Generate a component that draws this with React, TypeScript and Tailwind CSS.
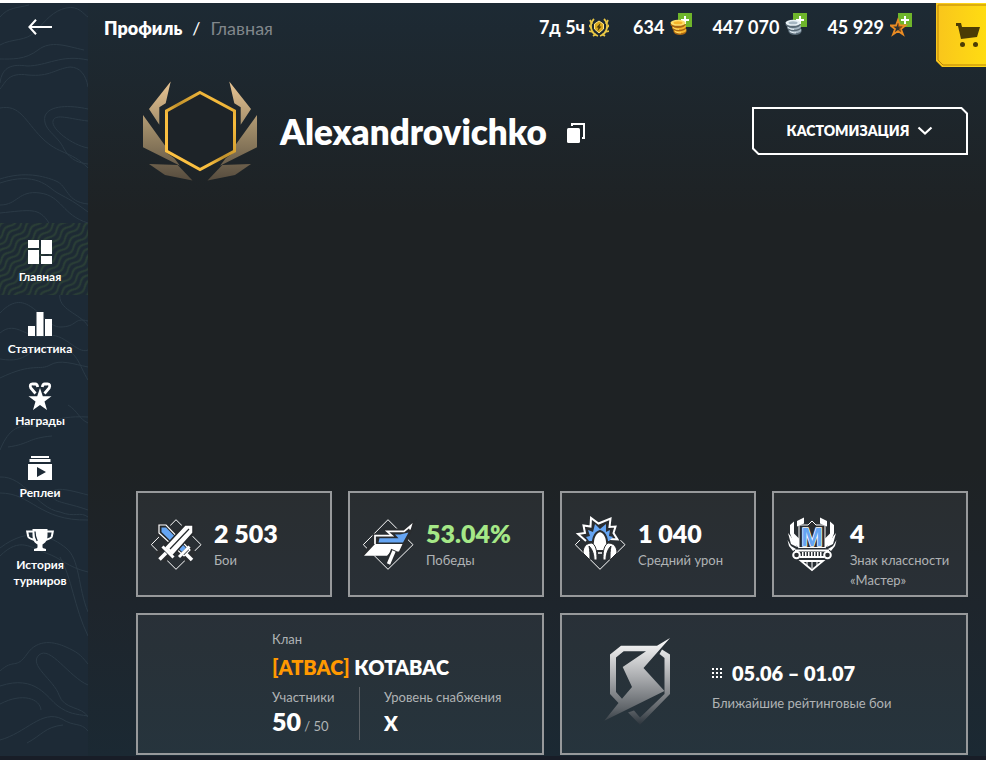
import type { ReactNode } from "react";

const FONT = "font-['Lato','Open_Sans',sans-serif]";

interface NavItem {
  label: string;
  icon: ReactNode;
  active?: boolean;
}

function BackArrow() {
  return (
    <svg width="24" height="16" viewBox="0 0 24 16" fill="none" stroke="#fff" strokeWidth="2" aria-hidden="true">
      <path d="M8 .8 1.4 8 8 15.2M1.4 8H24" />
    </svg>
  );
}

const NAV_ITEMS: NavItem[] = [
  {
    label: "Главная",
    active: true,
    icon: <path d="M0 0h11v8H0zM13 0h11v14H13zM0 10h11v14H0zM13 16h11v8H13z" />,
  },
  {
    label: "Статистика",
    icon: <path d="M0 14h7v10H0zM8.500 0h7v24h-7zM17 7h7v17h-7z" />,
  },
  {
    label: "Награды",
    icon: (
      <>
        <path d="M12 4 14.800 12.300H23.500L16.500 17.500 19 26 12 21 5 26 7.500 17.500.5 12.300H9.200Z" />
        <path d="M7.500 9.500 2.800 4Q1-.3 5 0H7.500Q9 0 9.800 3M16.500 9.500 21.200 4Q23-.3 19 0H16.500Q15 0 14.200 3" fill="none" stroke="#fff" strokeWidth="2.800" />
      </>
    ),
  },
  {
    label: "Реплеи",
    icon: <path d="M3 0h18v2H3zM1.500 3h21v3h-21zM0 8h24v16H0zM9 11v10l9-5Z" fillRule="evenodd" />,
  },
  {
    label: "История турниров",
    icon: (
      <>
        <path d="M4.500 1h15v6c0 5-2 8-5 9.500V19c0 1 1 1.500 3.500 2v2H6v-2c2.500-.5 3.500-1 3.500-2v-2.500c-3-1.500-5-4.500-5-9.500Z" />
        <path d="M5 3.500H-.8l1 5C.8 10.500 3 11 7 12M19 3.500h5.800l-1 5c-.6 2-2.800 2.500-6.800 3.500" fill="none" stroke="#fff" strokeWidth="2" />
        <path d="M7 3.500c0 5 .8 7 2.200 9.500" fill="none" stroke="#1d2a36" strokeWidth="1.300" />
      </>
    ),
  },
];

// Topographic contour lines behind the navigation.
function Contours() {
  return (
    <svg
      className="pointer-events-none absolute inset-0 h-full w-full"
      viewBox="0 0 88 757"
      preserveAspectRatio="xMidYMin slice"
      fill="none"
      stroke="#2b3a46"
      strokeWidth="1"
      aria-hidden="true"
    >
      <path d="M0 42c12-7 26-3 36-14S53 8 66 5s18 7 22 9M0 14C8 4 18 5 29 2" />
      <path d="M0 56c12 0 25 1 38-9s28-4 46 0M0 80c2-17 13-19 27-17 20 0 34-12 61-6M0 86c6-7 8-17 28-14 22 2 27-6 42-8 10 0 16 8 18 20" />
      <path d="M0 105c20-4 25 13 42 30s28 12 46 30M88 106c-18-4-39-4-43 7-3 14 13 19 19 33 7 12 16 14 24 15" />
      <path d="M88 118c-18-2-33-8-35 0s19 24 35 27M0 176c24-8 44-3 56 2s10 21 32 23M0 180c36-12 48 4 56 9s15 7 32 20" />
      <path d="M0 202c18 0 18-15 40-12s22 22 48 30M0 210c30-3 39-6 49 10M0 310c28-30 42 14 60 14s13-10 28-6M0 330c16-14 28 8 46 3s31 19 42 14" />
      <path d="M60 290c-3 17 20 20 28 33M0 356c30 5 24-11 54-13 24 2 25 20 34 34M0 375c33-16 40-7 50-13s23-1 38 2" />
      <path d="M0 447c7-17 15-25 30-24s22-11 58-9M8 444c22-3 20-9 44-11M88 420c-9-4-10-12-20-18" />
      <path d="M88 492c-15-4-36-10-36-1s14 8 36 16M0 474c25-1 36 31 60 35 15 6 20-1 28 5M0 490c32 0 39 28 88 27" />
      <path d="M0 553c20-20 31-8 46-3s21 14 42 19M0 545c30-23 52-11 66 0s12 40 22 64M60 554c12 21 14 50 28 79" />
      <path d="M0 668c14-13 16-1 27-17s28-12 39-7 14 7 22 17M88 682c-19-8-38-40-49-30s15 25 20 40 23 11 29 22" />
      <path d="M0 683c36-12 47 12 58 20s17 8 30 10M0 701c23-12 40-5 41 6M0 737c26-7 42-31 62-21 12 8 19 3 26 12M27 740c15-8 18-16 36-18" />
    </svg>
  );
}

function ActivePattern() {
  return (
    <svg className="absolute inset-0 h-full w-full" aria-hidden="true">
      <defs>
        <pattern id="nav-waves" width="20" height="6" patternUnits="userSpaceOnUse" patternTransform="rotate(-45)">
          <path d="M-5 3Q0-.5 5 3t10 0 10 0" fill="none" stroke="#2b4036" strokeWidth="2" />
        </pattern>
      </defs>
      <rect width="100%" height="100%" fill="url(#nav-waves)" />
    </svg>
  );
}

function Sidebar() {
  return (
    <aside className="relative w-[88px] shrink-0 bg-[#1d2a36]">
      <Contours />
      <button type="button" aria-label="Назад" className="relative flex h-12 w-20 items-center justify-center">
        <BackArrow />
      </button>
      <nav className="relative mt-[172px]">
        {NAV_ITEMS.map((item) => (
          <a
            key={item.label}
            href="#"
            aria-current={item.active ? "page" : undefined}
            className={`relative block h-[72px] pt-[17px] text-white ${item.active ? "bg-[#1d2a34]" : ""}`}
          >
            {item.active && <ActivePattern />}
            <span className="relative flex w-20 flex-col items-center gap-[5px] text-center text-xs leading-4 font-bold">
              <svg width="24" height="24" viewBox="0 0 24 24" fill="#fff" className="overflow-visible" aria-hidden="true">
                {item.icon}
              </svg>
              {item.label}
            </span>
          </a>
        ))}
      </nav>
    </aside>
  );
}

function PlusBadge() {
  return (
    <>
      <path d="M8 0h14v14H8z" fill="#6fb52b" />
      <path d="M15 3v8M11 7h8" stroke="#fff" strokeWidth="2" />
    </>
  );
}

function CoinStack({ light, mid, dark }: { light: string; mid: string; dark: string }) {
  return (
    <svg width="22" height="28" viewBox="0 0 22 28" aria-hidden="true">
      <PlusBadge />
      <ellipse cx="10" cy="18.500" rx="6.500" ry="3.500" fill={dark} />
      <ellipse cx="10" cy="17" rx="6.500" ry="3.200" fill={mid} />
      <ellipse cx="9" cy="15" rx="7" ry="3.200" fill={dark} />
      <ellipse cx="9" cy="13.500" rx="7" ry="3.200" fill={mid} />
      <ellipse cx="8" cy="11.500" rx="7.500" ry="3.500" fill={dark} />
      <ellipse cx="8" cy="9.800" rx="7.500" ry="3" fill={light} />
      <ellipse cx="8" cy="9.800" rx="4.500" ry="1.500" fill={mid} />
      <path d="M3 14.500c2 1.500 4 2 6 1.800M5 18.500c2 1.200 4 1.600 6 1.300" fill="none" stroke={light} />
    </svg>
  );
}

function PremiumIcon() {
  return (
    <svg width="20" height="24" viewBox="0 0 20 24" aria-hidden="true">
      <g fill="none" stroke="#e9c744" strokeWidth="1.800">
        <path d="M5 4C0 9 1 18 9 21M15 4c5 5 4 14-4 17" />
        <path d="m3 9-2-4M2.500 13-.5 10M4 17l-4-1M17 9l2-4M17.500 13l3-3M16 17l4-1M7 19l-3 2M13 19l3 2" />
      </g>
      <path d="m10 6 4.500 3v5L10 18l-4.500-4V9Z" fill="#d8a71d" stroke="#ffe787" />
      <path d="m11.500 8-4 4.500h2L8.500 16l4-4.500h-2Z" fill="#44350b" />
    </svg>
  );
}

function StarIcon() {
  return (
    <svg width="22" height="28" viewBox="0 0 22 28" aria-hidden="true">
      <PlusBadge />
      <path d="m8 7 2 5.500h5.500L11 16l2 5.500L8 18l-5 3.500L5 16 .5 12.500H6Z" fill="#313431" stroke="#e98b23" strokeWidth="1.800" />
      <path d="m8 10.500 1 3.500h3l-2.500 1.800 1 3.200" fill="none" stroke="#a45712" />
    </svg>
  );
}

function Header() {
  return (
    <header className="flex items-start pl-4">
      <nav aria-label="Путь" className="flex h-[50px] items-center gap-2.5 text-lg">
        <a href="#" className="font-extrabold text-white">Профиль</a>
        <span className="text-white">/</span>
        <span className="font-normal text-[#81878b]">Главная</span>
      </nav>
      <ul className="mr-6 ml-auto flex h-12 items-center gap-5 text-lg font-bold text-white">
        <li className="mr-1 flex items-center gap-1">7д 5ч <PremiumIcon /></li>
        <li className="flex items-center gap-1.5">634 <CoinStack light="#ffe06c" mid="#f6b52c" dark="#a96513" /></li>
        <li className="flex items-center gap-1.5">447 070 <CoinStack light="#e8f1f6" mid="#a6b7c3" dark="#596a76" /></li>
        <li className="flex items-center gap-1.5">45 929 <StarIcon /></li>
      </ul>
      <button type="button" aria-label="Магазин" className="w-[50px] shrink-0">
        <svg width="50" height="64" viewBox="0 0 50 64" aria-hidden="true">
          <defs>
            <linearGradient id="shop" x1="0" x2="1">
              <stop stopColor="#f9c51c" />
              <stop offset="1" stopColor="#ffdc12" />
            </linearGradient>
          </defs>
          <path d="M0 0h50v64H6l-6-6Z" fill="url(#shop)" />
          <path d="M50 2H2v55l5 5h43" fill="none" stroke="#b98408" />
          <path d="M20 20h5l1 4h18l-3 10-16 2-3-13h-2Z" fill="#4b3c05" />
          <circle cx="26.500" cy="41.500" r="2.500" fill="#4b3c05" />
          <circle cx="39.500" cy="41.500" r="2.500" fill="#4b3c05" />
        </svg>
      </button>
    </header>
  );
}

function Avatar() {
  const feathers = (
    <>
      <path d="m28.700 1.500-5 21.800-6.400 4v17.400L7 29Z" />
      <path d="M1 35v32.300l37 18.400-5.700-7.400-9-6.300V66Z" />
      <path d="m7 84 28.700 1L50.500 100.500 23 95Z" />
    </>
  );
  return (
    <svg width="116" height="102" viewBox="0 0 116 102" aria-hidden="true">
      <defs>
        <linearGradient id="feather" gradientUnits="userSpaceOnUse" x1="0" y1="0" x2="0" y2="102">
          <stop stopColor="#ecc795" />
          <stop offset=".5" stopColor="#9b8866" />
          <stop offset="1" stopColor="#544a3d" />
        </linearGradient>
        <linearGradient id="hex" x1="0" y1="1" x2="1" y2="0">
          <stop stopColor="#ffc445" />
          <stop offset=".35" stopColor="#f8bd3e" />
          <stop offset=".5" stopColor="#c1912b" />
          <stop offset=".8" stopColor="#f6bb3c" />
          <stop offset="1" stopColor="#d39f30" />
        </linearGradient>
      </defs>
      <g fill="url(#feather)">
        {feathers}
        <g transform="translate(116) scale(-1 1)">{feathers}</g>
      </g>
      <path d="M58 12.500 92.500 31v40L58 89.500 24.500 71V31Z" fill="#1d2328" stroke="url(#hex)" strokeWidth="3" />
    </svg>
  );
}

function ProfileHead() {
  return (
    <div className="mt-[13px] flex items-center pl-1.5">
      <Avatar />
      <h1 className="ml-[22px] text-[35px] leading-10 font-extrabold text-white">Alexandrovichko</h1>
      <button type="button" aria-label="Скопировать" className="mt-1 ml-5">
        <svg width="18" height="20" viewBox="0 0 18 20" aria-hidden="true">
          <rect y="5" width="13" height="15" rx="1.500" fill="#fff" />
          <path d="M5 3V1h12v14h-2" fill="none" stroke="#fff" strokeWidth="2" />
        </svg>
      </button>
      <button
        type="button"
        className="relative ml-auto flex h-12 w-[216px] items-center justify-center gap-2 text-sm font-extrabold text-white"
      >
        <svg className="absolute inset-0" width="216" height="48" viewBox="0 0 216 48" fill="none" stroke="#fff" strokeWidth="2" aria-hidden="true">
          <path d="M1 1h208.500L215 6.500V47H6.500L1 41.500Z" />
        </svg>
        КАСТОМИЗАЦИЯ
        <svg width="16" height="16" viewBox="0 0 16 16" fill="none" stroke="#fff" strokeWidth="2.200" aria-hidden="true">
          <path d="m1.500 4.500 6.500 6 6.500-6" />
        </svg>
      </button>
    </div>
  );
}

const DIAMOND = "M26 1.700 51 26.700 26 51.300 1.300 26.700Z";

function BattlesIcon() {
  return (
    <>
      <path d={DIAMOND} fill="none" stroke="#fff" />
      <g stroke="#2a2d30" strokeWidth="4" strokeLinejoin="round">
        <path d="M9 7h8l27 28-7 7L9 16Z" />
        <path d="M43 7h-8L8 35l7 7 28-27Z" />
      </g>
      <path d="M9 7h7l24 25-6 6L9 15Z" fill="#25292c" stroke="#fff" strokeWidth="1.200" />
      <path d="M11.500 9.500H16L36 30l-4 4-20.500-20Z" fill="#65a5f3" />
      <path d="m29 39 10.500-10.500" stroke="#fff" strokeWidth="3" />
      <path d="m36 36 6 6" stroke="#fff" strokeWidth="3.500" />
      <path d="M43 7h-8L14 29.500l8.500 8.500L43 15Z" fill="#fff" stroke="#25292c" strokeWidth="1.500" />
      <path d="M39 11 20 31" stroke="#25292c" strokeWidth="1.200" />
      <path d="M12.500 28.500 23.500 39.500" stroke="#fff" strokeWidth="3" />
      <path d="m16 35-6.500 6.500" stroke="#fff" strokeWidth="3.500" />
    </>
  );
}

function WinsIcon() {
  return (
    <>
      <path d={DIAMOND} fill="none" stroke="#fff" />
      <path d="M12 17h15l-3-5h19l8-6-9 21-6 9H2l10-12Z" fill="#292c2f" stroke="#292c2f" strokeWidth="3" />
      <path d="M13 26V17.700h17l-5-4.400h17L49 7.500l-1.200 4" fill="none" stroke="#fff" strokeWidth="1.700" />
      <path d="M17.500 20.300h19L33 16.500h5l8.500-2L41 24.500H16.500Z" fill="#65a5f3" />
      <path d="M13 26h27.500L37 33.500h-8l-4 4.300H2Z" fill="#fff" />
      <path d="m32 32-5.500 13.500" stroke="#292c2f" strokeWidth="6" />
      <path d="m32 33-5.500 13" stroke="#fff" strokeWidth="3.500" />
    </>
  );
}

function DamageIcon() {
  return (
    <>
      <path d="m6 22-4.700 4.700L26 51.300l25-24.600-4.500-4.500" fill="none" stroke="#fff" />
      <path
        d="M12 23 4 16l7-1L9.500 7.500l7 1L17 0l7.500 5.500L36.500.5 35.500 9l6-.5-2 6.500 4 6.500-8-.5"
        fill="#2a2d30"
        stroke="#fff"
        strokeWidth="2"
      />
      <path d="m15 23-3-4 4-1-2-6 5 2 2-8 5 5 6-5v8l4-2-1 6 4 1-4 4Z" fill="#65a5f3" />
      <path d="M19 33c-1-10 0-18 7-20 7 2 8 10 7 20Z" fill="#fff" stroke="#2a2d30" strokeWidth="2" />
      <path d="M9 35c0-6 3-10 9-10 5 3 5 11 5 17h-3c0-8-3-12-5-14 1 5 1 8 1 14ZM43 35c0-6-3-10-9-10-5 3-5 11-5 17h3c0-8 3-12 5-14-1 5-1 8-1 14Z" fill="#fff" stroke="#2a2d30" strokeWidth="1" />
      <path d="M24 35h4" stroke="#fff" strokeWidth="1.500" />
    </>
  );
}

function MasterIcon() {
  const wing = (
    <>
      <path d="M18-.5v6l-7 3V3Z" />
      <path d="M8 3.500v12l5 5v10l-6-7-3-8V7Z" />
      <path d="M2 15c3 3 5 7 8 11l1 3-6-3Z" />
      <path d="M1.500 22 5 28l5 3-3 2-4-5Z" />
    </>
  );
  return (
    <>
      <g fill="#fff">
        {wing}
        <g transform="translate(52) scale(-1 1)">{wing}</g>
      </g>
      <path d="M13 29.500V7h9l4-4 4 4h9v22.500Z" fill="#292c2f" stroke="#fff" strokeWidth="1" />
      <text
        x="26"
        y="28"
        textAnchor="middle"
        fontFamily="Liberation Sans, sans-serif"
        fontWeight="700"
        fontSize="26"
        fill="#65a5f3"
        stroke="#fff"
        strokeWidth="1.500"
        paintOrder="stroke"
      >
        M
      </text>
      <path d="M9 32.500h34M14 39h24M15 43h22L26 52Z" fill="none" stroke="#fff" strokeWidth="1.800" />
      <path d="M16 36h20" stroke="#fff" strokeWidth="4" strokeDasharray="1.500 1.500" />
      <circle cx="10.500" cy="37" r="3.300" fill="#292c2f" stroke="#fff" strokeWidth="2" />
      <circle cx="41.500" cy="37" r="3.300" fill="#292c2f" stroke="#fff" strokeWidth="2" />
      <path d="M21 43v5M26 43v7M31 43v5" stroke="#fff" />
    </>
  );
}

interface Stat {
  value: string;
  label: string;
  icon: ReactNode;
  color?: string;
}

const STATS: Stat[] = [
  { value: "2 503", label: "Бои", icon: <BattlesIcon /> },
  { value: "53.04%", label: "Победы", icon: <WinsIcon />, color: "text-[#a5e887]" },
  { value: "1 040", label: "Средний урон", icon: <DamageIcon /> },
  { value: "4", label: "Знак классности «Мастер»", icon: <MasterIcon /> },
];

function StatCard({ value, label, icon, color = "text-white" }: Stat) {
  return (
    <article className="flex h-[106px] items-start gap-3 border-2 border-[#97999b] bg-white/5 pt-6 pl-3">
      <svg width="52" height="52" viewBox="0 0 52 52" fill="none" className="mt-px shrink-0 overflow-visible" aria-hidden="true">
        {icon}
      </svg>
      <div>
        <p className={`text-[25px] leading-8 font-extrabold ${color}`}>{value}</p>
        <p className="mt-px text-[13px] leading-5 text-[#b0b3b5]">{label}</p>
      </div>
    </article>
  );
}

function ClanCard() {
  return (
    <article className="h-[142px] border-2 border-[#97999b] bg-white/5 pt-3.5 pl-[134px] text-[13px] leading-5 text-[#b0b3b5]">
      <p>Клан</p>
      <h2 className="mt-1 text-xl leading-7 font-extrabold text-white">
        <span className="text-[#ff9900]">[АТВАС]</span> КОТАВАС
      </h2>
      <dl className="mt-1.5 flex">
        <div className="w-[88px] border-r border-[#5c6166]">
          <dt>Участники</dt>
          <dd className="leading-7">
            <b className="text-[25px] font-extrabold text-white">50</b> / 50
          </dd>
        </div>
        <div className="pl-6">
          <dt>Уровень снабжения</dt>
          <dd className="text-xl leading-8 font-extrabold text-white">X</dd>
        </div>
      </dl>
    </article>
  );
}

function RatingCard() {
  return (
    <article className="flex h-[142px] items-center border-2 border-[#97999b] bg-white/5 pl-10">
      <svg width="70" height="92" viewBox="0 0 70 92" className="mb-1 shrink-0" aria-hidden="true">
        <defs>
          <linearGradient id="bolt" gradientUnits="userSpaceOnUse" x1="0" y1="2" x2="0" y2="90">
            <stop stopColor="#fff" />
            <stop offset=".45" stopColor="#a9abae" />
            <stop offset=".8" stopColor="#60656a" />
            <stop offset="1" stopColor="#29323a" />
          </linearGradient>
        </defs>
        <path
          fill="url(#bolt)"
          d="M68 2 41.500 32 62.500 55 2.300 84.700 16.500 67 8 58V18.500L19 9.700h36ZM44 15.300H21.700L14 21.500V56l6 6.700L30 51 20.700 31Z"
          fillRule="evenodd"
        />
        <path fill="url(#bolt)" d="m60 13.500 8 5V58L38 88.700 26 76.500l6-2 6 7L62.500 58V22l-5-4Z" />
      </svg>
      <div className="mt-1 ml-10">
        <p className="flex items-center gap-2.5 text-xl leading-7 font-extrabold text-white">
          <svg width="10" height="10" viewBox="0 0 10 10" fill="#fff" aria-hidden="true">
            <path d="M0 0h2v2H0zM4 0h2v2H4zM8 0h2v2H8zM0 4h2v2H0zM4 4h2v2H4zM8 4h2v2H8zM0 8h2v2H0zM4 8h2v2H4zM8 8h2v2H8z" />
          </svg>
          05.06 – 01.07
        </p>
        <p className="mt-1.5 text-[13px] leading-5 text-[#b0b3b5]">Ближайшие рейтинговые бои</p>
      </div>
    </article>
  );
}

export default function App() {
  return (
    <div className={`flex min-h-screen border-t-[3px] border-b-4 border-t-white border-b-[#181d27] bg-[#1e2225] ${FONT}`}>
      <Sidebar />
      <div className="flex min-w-0 flex-1 flex-col bg-[linear-gradient(to_bottom,#1d2a34_0%,#1e2224_28%,#1e2224_62%,#1e252c_80%,#1b2933_100%)]">
        <Header />
        <main className="flex flex-1 flex-col pr-[18px] pb-px pl-12">
          <ProfileHead />
          <section className="mt-auto grid grid-cols-4 gap-4">
            {STATS.map((stat) => (
              <StatCard key={stat.label} {...stat} />
            ))}
          </section>
          <section className="mt-4 grid grid-cols-2 gap-4">
            <ClanCard />
            <RatingCard />
          </section>
        </main>
      </div>
    </div>
  );
}
